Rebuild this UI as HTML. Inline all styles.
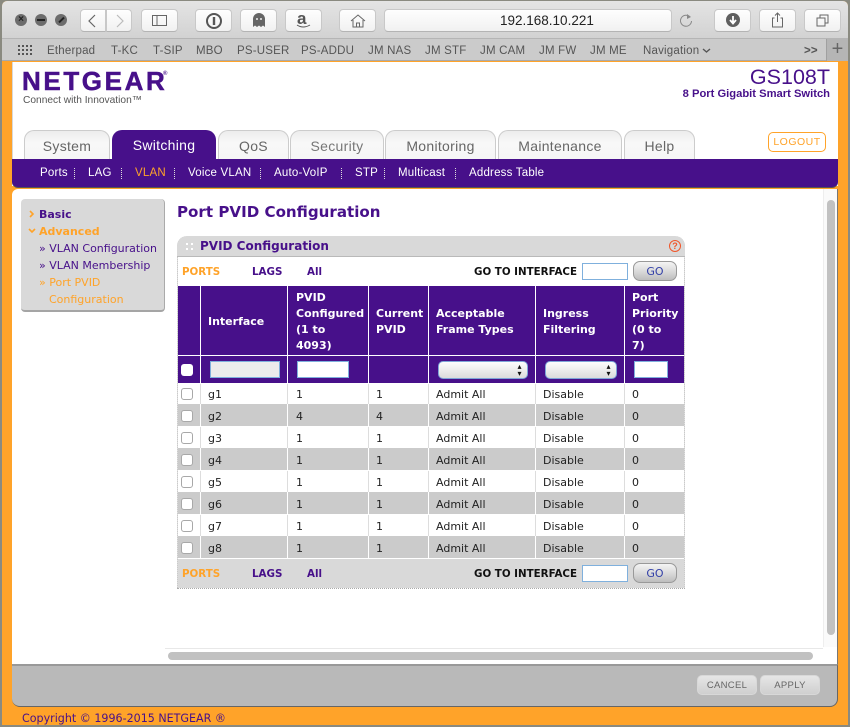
<!DOCTYPE html>
<html><head><meta charset="utf-8"><style>
html,body{margin:0;padding:0;width:850px;height:727px;overflow:hidden;background:#fff}
#r{position:relative;width:850px;height:727px;overflow:hidden;font-family:"DejaVu Sans",Verdana,sans-serif;font-size:11px;color:#222}
#r div,#r span.a{position:absolute;white-space:nowrap;box-sizing:border-box}
.btn{background:linear-gradient(#fefefe,#f1f1f1);border:1px solid #c8c8c8;border-bottom-color:#b4b4b4;border-radius:4px;top:9px;height:23px}
.bm{top:44px;font:11.5px/14px "Liberation Sans",sans-serif;color:#555;letter-spacing:.2px}
.tab{top:130px;height:29px;background:linear-gradient(#ececec,#f8f8f8 40%,#f6f6f6);border:1px solid #ccc;border-bottom:0;border-radius:10px 10px 0 0;text-align:center;font:14px/30px "Liberation Sans",sans-serif;color:#666;letter-spacing:.3px}
.sub{top:167px;font:11.5px "Liberation Sans",sans-serif;color:#fff;letter-spacing:.2px}
.sep{top:168px;height:11px;width:0;border-left:1px dotted #ddd}
.side{font-size:11px;color:#47108a;left:39px}
.th{color:#fff;font-weight:bold;font-size:11px;line-height:16px;white-space:nowrap}
.vl{width:1px;background:#fff}
.gl{width:1px;top:384px;height:154px;background:repeating-linear-gradient(#ddd 0 20px,#fff 20px 21px,#fff 21px 43px,#ddd 43px 44px)}
.cell{font-size:11px;line-height:14px;color:#222}
.cb{width:12px;height:12px;left:181px;background:#fff;border:1px solid #a8a8a8;border-radius:3px}
.in{background:#fff;border:1px solid #7fb0dd}
.go{width:44px;height:20px;border:1px solid #999;border-radius:7px;background:linear-gradient(#f4f4f4,#d8d8d8 55%,#bdbdbd);color:#3340a8;font-size:11px;line-height:19px;text-align:center;left:633px}
.lnk{font-weight:bold;font-size:10.3px}
.sel{height:18px;border:1px solid #7fa6d8;border-radius:5px;background:linear-gradient(#fdfdfd,#dcdcdc);top:361px}
.sel span{position:absolute;right:4px;top:1px;font-size:8px;line-height:7px;color:#111;white-space:normal;width:7px;text-align:center}
.bt{top:675px;width:60px;height:20px;background:linear-gradient(#e6e6e6,#cfcfcf);border:1px solid #d8d8d8;border-radius:5px;text-align:center;font:9.5px/20px "Liberation Sans",sans-serif;color:#666;letter-spacing:.3px}
</style></head><body><div id="r">
<div style="left:0;top:0;width:850px;height:727px;background:#8a8a80"></div>
<div style="left:2px;top:1px;width:846px;height:724px;background:#ffa329;border-radius:5px 5px 0 0"></div>
<!-- toolbar -->
<div style="left:2px;top:1px;width:846px;height:38px;background:linear-gradient(#e4e4e4,#d2d2d2);border-bottom:1px solid #b5b5b5;border-radius:5px 5px 0 0"></div>
<div style="left:2px;top:39px;width:846px;height:22px;background:#cbcbcb;border-bottom:1px solid #a9a9a9"></div>
<div style="left:15px;top:14px;width:12px;height:12px;border-radius:50%;background:#6c6c6c;color:#222;font:bold 10px/12px 'Liberation Sans';text-align:center">×</div>
<div style="left:35px;top:14px;width:12px;height:12px;border-radius:50%;background:#6c6c6c"><div style="left:2px;top:5px;width:8px;height:2px;background:#222"></div></div>
<div style="left:55px;top:14px;width:12px;height:12px;border-radius:50%;background:#6c6c6c"><div style="left:3px;top:5px;width:7px;height:2px;background:#222;transform:rotate(-45deg)"></div></div>
<div class="btn" style="left:80px;width:26px;border-radius:4px 0 0 4px"></div>
<div class="btn" style="left:106px;width:26px;border-radius:0 4px 4px 0"></div>
<svg style="position:absolute;left:80px;top:9px" width="52" height="23" fill="none"><path d="M15 6l-6 6 6 6" stroke="#666" stroke-width="1.2"/><path d="M37 6l6 6-6 6" stroke="#bbb" stroke-width="1.2"/></svg>
<div class="btn" style="left:141px;width:37px"></div>
<svg style="position:absolute;left:152px;top:15px" width="16" height="12" fill="none" stroke="#666"><rect x=".5" y=".5" width="14" height="10"/><path d="M5 .5v10"/></svg>
<div class="btn" style="left:195px;width:37px"></div>
<svg style="position:absolute;left:205px;top:12px" width="18" height="18" fill="none"><circle cx="9" cy="9" r="7" stroke="#555" stroke-width="2"/><path d="M9 5v8" stroke="#555" stroke-width="2.4"/></svg>
<div class="btn" style="left:240px;width:37px"></div>
<svg style="position:absolute;left:252px;top:13px" width="14" height="15"><path d="M1 14V6a6 6 0 0 1 12 0v8l-2-1.500-2 1.500-2-1.500-2 1.500-2-1.500z" fill="#666"/><circle cx="5" cy="6" r="1" fill="#eee"/><circle cx="9" cy="6" r="1" fill="#eee"/></svg>
<div class="btn" style="left:285px;width:37px"></div>
<div style="left:297px;top:9px;font:bold 17px 'Liberation Sans';color:#555">a</div>
<svg style="position:absolute;left:296px;top:24px" width="16" height="5" fill="none"><path d="M1 1q6 4 13 0" stroke="#555"/></svg>
<div class="btn" style="left:339px;width:37px"></div>
<svg style="position:absolute;left:350px;top:13px" width="16" height="15" fill="none" stroke="#666"><path d="M1 8l7-6 7 6M3 7v7h10V7M6.500 14v-4h3v4"/></svg>
<div class="btn" style="left:384px;width:288px"></div>
<div style="left:500px;top:13px;font:13.5px 'Liberation Sans';color:#222">192.168.10.221</div>
<svg style="position:absolute;left:679px;top:13px" width="15" height="15" fill="none"><path d="M11 4a5.500 5.500 0 1 0 1.500 4" stroke="#888"/><path d="M8 1l4 3-4 2z" fill="#888"/></svg>
<div class="btn" style="left:714px;width:37px"></div>
<svg style="position:absolute;left:726px;top:13px" width="14" height="14"><circle cx="7" cy="7" r="7" fill="#5f5f5f"/><path d="M7 3v6M4 7l3 3.500L10 7" stroke="#fff" stroke-width="1.800" fill="none"/></svg>
<div class="btn" style="left:759px;width:37px"></div>
<svg style="position:absolute;left:771px;top:12px" width="14" height="16" fill="none" stroke="#666"><path d="M3.500 6H1.500v9h10V6H9.500M6.500 10V1M4 3.500L6.500 1 9 3.500"/></svg>
<div class="btn" style="left:804px;width:37px"></div>
<svg style="position:absolute;left:816px;top:14px" width="14" height="13" fill="none" stroke="#666"><rect x="1" y="4" width="8" height="8"/><path d="M4 4V1h8v8H9"/></svg>
<svg style="position:absolute;left:18px;top:44px" width="15" height="12" fill="#555"><rect x="0" y="1" width="2" height="2"/><rect x="4" y="1" width="2" height="2"/><rect x="8" y="1" width="2" height="2"/><rect x="12" y="1" width="2" height="2"/><rect x="0" y="5" width="2" height="2"/><rect x="4" y="5" width="2" height="2"/><rect x="8" y="5" width="2" height="2"/><rect x="12" y="5" width="2" height="2"/><rect x="0" y="9" width="2" height="2"/><rect x="4" y="9" width="2" height="2"/><rect x="8" y="9" width="2" height="2"/><rect x="12" y="9" width="2" height="2"/></svg>
<div class="bm" style="left:47px">Etherpad</div><div class="bm" style="left:111px">T-KC</div><div class="bm" style="left:153px">T-SIP</div><div class="bm" style="left:196px">MBO</div><div class="bm" style="left:237px">PS-USER</div><div class="bm" style="left:301px">PS-ADDU</div><div class="bm" style="left:368px">JM NAS</div><div class="bm" style="left:425px">JM STF</div><div class="bm" style="left:480px">JM CAM</div><div class="bm" style="left:539px">JM FW</div><div class="bm" style="left:590px">JM ME</div><div class="bm" style="left:643px">Navigation</div>
<svg style="position:absolute;left:702px;top:48px" width="9" height="6" fill="none"><path d="M1 1l3.500 3L8 1" stroke="#555" stroke-width="1.400"/></svg>
<div class="bm" style="left:804px;font-weight:bold">&gt;&gt;</div>
<div style="left:826px;top:39px;width:22px;height:22px;background:#b5b5b5;border-left:1px solid #a0a0a0;font:20px/20px 'Liberation Sans';color:#666;text-align:center">+</div>
<!-- page -->
<div style="left:12px;top:62px;width:826px;height:124px;background:#fff"></div>
<div style="left:22px;top:66px;font:bold 26px/30px 'Liberation Sans',sans-serif;color:#47108a;letter-spacing:2.6px;-webkit-text-stroke:.5px #47108a">NETGEAR</div>
<div style="left:163px;top:71px;font:bold 6px 'Liberation Sans';color:#47108a">®</div>
<div style="left:23px;top:95px;font:10.2px 'Liberation Sans';color:#555">Connect with Innovation™</div>
<div style="right:20px;top:64px;font:21.5px/26px 'Liberation Sans',sans-serif;color:#47108a">GS108T</div>
<div style="right:20px;top:88px;font:bold 11.2px 'Liberation Sans',sans-serif;color:#47108a">8 Port Gigabit Smart Switch</div>
<div class="tab" style="left:24px;width:86px">System</div>
<div class="tab" style="left:112px;width:104px;background:#47108a;border:0;color:#fff">Switching</div>
<div class="tab" style="left:218px;width:71px">QoS</div>
<div class="tab" style="left:290px;width:94px;color:#777">Security</div>
<div class="tab" style="left:385px;width:111px">Monitoring</div>
<div class="tab" style="left:498px;width:124px">Maintenance</div>
<div class="tab" style="left:624px;width:71px">Help</div>
<div style="left:768px;top:132px;width:58px;height:20px;border:1px solid #ffa329;border-radius:5px;color:#ffa329;text-align:center;font:10.5px/19px 'Liberation Sans';letter-spacing:.5px">LOGOUT</div>
<div style="left:12px;top:159px;width:826px;height:29px;background:#47108a;border-radius:0 0 6px 6px;border-bottom:1px solid #555"></div>
<div class="sub" style="left:40px">Ports</div><div class="sep" style="left:74px"></div>
<div class="sub" style="left:88px">LAG</div><div class="sep" style="left:121px"></div>
<div class="sub" style="left:135px;color:#ffa329">VLAN</div><div class="sep" style="left:174px"></div>
<div class="sub" style="left:188px">Voice VLAN</div><div class="sep" style="left:260px"></div>
<div class="sub" style="left:274px">Auto-VoIP</div><div class="sep" style="left:341px"></div>
<div class="sub" style="left:355px">STP</div><div class="sep" style="left:384px"></div>
<div class="sub" style="left:398px">Multicast</div><div class="sep" style="left:455px"></div>
<div class="sub" style="left:469px">Address Table</div>
<!-- content -->
<div style="left:12px;top:189px;width:826px;height:476px;background:#fff;border-radius:6px 6px 0 0"></div>
<div style="left:21px;top:199px;width:144px;height:113px;background:#d9d9d9;border-radius:4px;border-right:1px solid #aaa;border-bottom:2px solid #a5a5a5"></div>
<svg style="position:absolute;left:28px;top:210px" width="8" height="24" fill="none" stroke="#ffa329" stroke-width="1.600"><path d="M2 1l3 3-3 3"/><path d="M1 19l3 3 3-3"/></svg>
<div class="side" style="top:208px;font-weight:bold">Basic</div>
<div class="side" style="top:225px;font-weight:bold;color:#ffa329">Advanced</div>
<div class="side" style="top:242px">» VLAN Configuration</div>
<div class="side" style="top:259px">» VLAN Membership</div>
<div class="side" style="top:276px;color:#ffa329">» Port PVID</div>
<div class="side" style="top:293px;left:49px;color:#ffa329">Configuration</div>
<div style="left:177px;top:203px;font-size:15.1px;font-weight:bold;color:#47108a">Port PVID Configuration</div>
<!-- panel -->
<div style="left:177px;top:236px;width:508px;height:353px;border:1px dotted #aaa;border-top:0;border-radius:10px 10px 0 0;background:#fff"></div>
<div style="left:177px;top:236px;width:508px;height:21px;background:#d9d9d9;border-radius:10px 10px 0 0;border-bottom:1px solid #b9b9b9"></div>
<div style="left:186px;top:243px;width:7px;height:7px;border-left:2px dotted #fff;border-right:2px dotted #fff"></div>
<div style="left:200px;top:239px;font-size:12px;font-weight:bold;color:#47108a">PVID Configuration</div>
<div style="left:669px;top:240px;width:12px;height:12px;border:1px solid #f0562a;border-radius:50%;color:#f0562a;font:bold 9px/10px 'Liberation Sans';text-align:center">?</div>
<div class="lnk" style="left:182px;top:266px;color:#ffa329">PORTS</div>
<div class="lnk" style="left:252px;top:266px;color:#47108a">LAGS</div>
<div class="lnk" style="left:307px;top:266px;color:#47108a">All</div>
<div class="lnk" style="left:474px;top:266px;color:#111">GO TO INTERFACE</div>
<div class="in" style="left:582px;top:263px;width:46px;height:17px"></div>
<div class="go" style="top:261px">GO</div>
<!-- table -->
<div style="left:178px;top:286px;width:506px;height:97px;background:#47108a"></div>
<div style="left:178px;top:355px;width:506px;height:1px;background:#fff"></div>
<div class="th" style="left:208px;top:314px">Interface</div>
<div class="th" style="left:296px;top:290px">PVID<br>Configured<br>(1 to<br>4093)</div>
<div class="th" style="left:376px;top:306px">Current<br>PVID</div>
<div class="th" style="left:436px;top:306px">Acceptable<br>Frame Types</div>
<div class="th" style="left:543px;top:306px">Ingress<br>Filtering</div>
<div class="th" style="left:632px;top:290px">Port<br>Priority<br>(0 to<br>7)</div>
<div style="left:181px;top:364px;width:12px;height:12px;background:#fff;border-radius:3px"></div>
<div class="in" style="left:210px;top:361px;width:70px;height:17px;background:#ececec"></div>
<div class="in" style="left:297px;top:361px;width:52px;height:17px"></div>
<div class="sel" style="left:438px;width:90px"><span>▴<br>▾</span></div>
<div class="sel" style="left:545px;width:72px"><span>▴<br>▾</span></div>
<div class="in" style="left:634px;top:361px;width:34px;height:17px"></div>
<!-- rows -->
<div style="left:178px;top:404px;width:506px;height:22px;background:#cbcbcb"></div>
<div style="left:178px;top:448px;width:506px;height:22px;background:#cbcbcb"></div>
<div style="left:178px;top:492px;width:506px;height:22px;background:#cbcbcb"></div>
<div style="left:178px;top:536px;width:506px;height:22px;background:#cbcbcb"></div>
<div class="cb" style="top:388px"></div><div class="cell" style="left:208px;top:388px">g1</div><div class="cell" style="left:296px;top:388px">1</div><div class="cell" style="left:376px;top:388px">1</div><div class="cell" style="left:436px;top:388px">Admit All</div><div class="cell" style="left:543px;top:388px">Disable</div><div class="cell" style="left:632px;top:388px">0</div>
<div class="cb" style="top:410px"></div><div class="cell" style="left:208px;top:410px">g2</div><div class="cell" style="left:296px;top:410px">4</div><div class="cell" style="left:376px;top:410px">4</div><div class="cell" style="left:436px;top:410px">Admit All</div><div class="cell" style="left:543px;top:410px">Disable</div><div class="cell" style="left:632px;top:410px">0</div>
<div class="cb" style="top:432px"></div><div class="cell" style="left:208px;top:432px">g3</div><div class="cell" style="left:296px;top:432px">1</div><div class="cell" style="left:376px;top:432px">1</div><div class="cell" style="left:436px;top:432px">Admit All</div><div class="cell" style="left:543px;top:432px">Disable</div><div class="cell" style="left:632px;top:432px">0</div>
<div class="cb" style="top:454px"></div><div class="cell" style="left:208px;top:454px">g4</div><div class="cell" style="left:296px;top:454px">1</div><div class="cell" style="left:376px;top:454px">1</div><div class="cell" style="left:436px;top:454px">Admit All</div><div class="cell" style="left:543px;top:454px">Disable</div><div class="cell" style="left:632px;top:454px">0</div>
<div class="cb" style="top:476px"></div><div class="cell" style="left:208px;top:476px">g5</div><div class="cell" style="left:296px;top:476px">1</div><div class="cell" style="left:376px;top:476px">1</div><div class="cell" style="left:436px;top:476px">Admit All</div><div class="cell" style="left:543px;top:476px">Disable</div><div class="cell" style="left:632px;top:476px">0</div>
<div class="cb" style="top:498px"></div><div class="cell" style="left:208px;top:498px">g6</div><div class="cell" style="left:296px;top:498px">1</div><div class="cell" style="left:376px;top:498px">1</div><div class="cell" style="left:436px;top:498px">Admit All</div><div class="cell" style="left:543px;top:498px">Disable</div><div class="cell" style="left:632px;top:498px">0</div>
<div class="cb" style="top:520px"></div><div class="cell" style="left:208px;top:520px">g7</div><div class="cell" style="left:296px;top:520px">1</div><div class="cell" style="left:376px;top:520px">1</div><div class="cell" style="left:436px;top:520px">Admit All</div><div class="cell" style="left:543px;top:520px">Disable</div><div class="cell" style="left:632px;top:520px">0</div>
<div class="cb" style="top:542px"></div><div class="cell" style="left:208px;top:542px">g8</div><div class="cell" style="left:296px;top:542px">1</div><div class="cell" style="left:376px;top:542px">1</div><div class="cell" style="left:436px;top:542px">Admit All</div><div class="cell" style="left:543px;top:542px">Disable</div><div class="cell" style="left:632px;top:542px">0</div>
<!-- vertical lines -->
<div class="vl" style="left:200px;top:286px;height:273px"></div>
<div class="vl" style="left:287px;top:286px;height:273px"></div>
<div class="vl" style="left:368px;top:286px;height:273px"></div>
<div class="vl" style="left:428px;top:286px;height:273px"></div>
<div class="vl" style="left:535px;top:286px;height:273px"></div>
<div class="vl" style="left:624px;top:286px;height:273px"></div>
<div class="gl" style="left:200px"></div>
<div class="gl" style="left:287px"></div>
<div class="gl" style="left:368px"></div>
<div class="gl" style="left:428px"></div>
<div class="gl" style="left:535px"></div>
<div class="gl" style="left:624px"></div>
<!-- footer -->
<div style="left:178px;top:558px;width:506px;height:30px;background:#d9d9d9;border-top:1px solid #fff"></div>
<div class="lnk" style="left:182px;top:568px;color:#ffa329">PORTS</div>
<div class="lnk" style="left:252px;top:568px;color:#47108a">LAGS</div>
<div class="lnk" style="left:307px;top:568px;color:#47108a">All</div>
<div class="lnk" style="left:474px;top:568px;color:#111">GO TO INTERFACE</div>
<div class="in" style="left:582px;top:565px;width:46px;height:17px"></div>
<div class="go" style="top:563px">GO</div>
<!-- scrollbars -->
<div style="left:823px;top:189px;width:15px;height:458px;background:#fafafa;border-left:1px solid #eee"></div>
<div style="left:827px;top:200px;width:8px;height:435px;background:#c1c1c1;border-radius:4px"></div>
<div style="left:165px;top:648px;width:658px;height:1px;background:#e8e8e8"></div>
<div style="left:168px;top:652px;width:645px;height:8px;background:#c1c1c1;border-radius:4px"></div>
<!-- window edge lines -->
<div style="left:12px;top:62px;width:1px;height:97px;background:#d8d8d8"></div>
<div style="left:837px;top:189px;width:1px;height:476px;background:#777"></div>
<!-- bottom bar -->
<div style="left:12px;top:664px;width:826px;height:43px;background:#b9b9b9;border-top:2px solid #999;border-bottom:1px solid #666;border-right:1px solid #666;border-radius:0 0 8px 8px"></div>
<div class="bt" style="left:697px">CANCEL</div>
<div class="bt" style="left:760px">APPLY</div>
<div style="left:22px;top:712px;font-size:11.1px;color:#47108a">Copyright © 1996-2015 NETGEAR ®</div>
</div></body></html>
